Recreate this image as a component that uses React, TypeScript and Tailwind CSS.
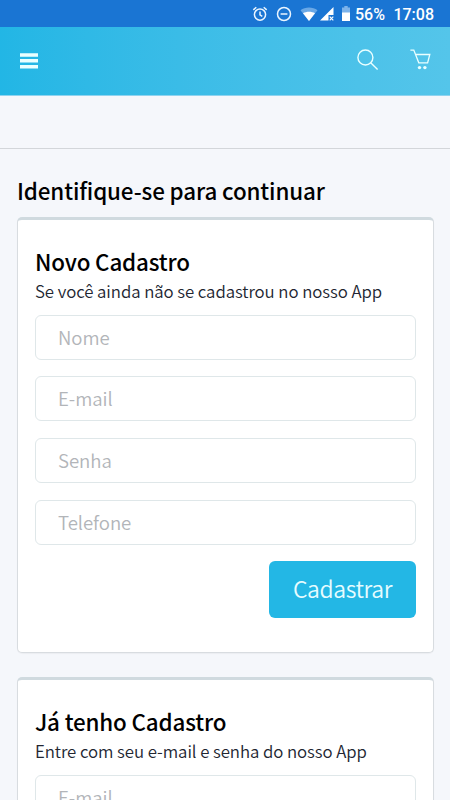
import type { ReactNode } from "react";

type FieldProps = {
  name: string;
  label: string;
  type?: string;
};

const StatusBar = () => (
  <div className="flex h-[27px] shrink-0 items-center justify-end bg-[#1a75d3] pr-[16px] text-white">
    <svg className="h-[16px] w-[16px]" viewBox="0 0 16 16" fill="none" stroke="#eaf5ff" strokeWidth="1.5">
      <circle cx="8" cy="8.6" r="5.6" />
      <path d="M8 5.4v3.5l2.3 1.5M1.3 3.9l3-2.6M14.7 3.9l-3-2.6" />
    </svg>
    <svg className="ml-[8px] h-[16px] w-[16px]" viewBox="0 0 16 16" fill="none" stroke="#eaf5ff" strokeWidth="1.5">
      <circle cx="8" cy="8" r="6.5" />
      <path d="M4.6 8h6.8" />
    </svg>
    <svg className="ml-[8px] h-[14px] w-[18px]" viewBox="0 0 18 14">
      <path d="M9 14L0.5 3.2C5 -0.4 13 -0.4 17.5 3.2z" fill="#6aa8e6" />
      <path d="M9 14L3 6.2C6.4 4.2 11.6 4.2 15 6.2z" fill="#fff" />
    </svg>
    <svg className="ml-[2px] h-[14px] w-[14px]" viewBox="0 0 14 14">
      <path d="M13.5 0v8H8.5v5.5H0z" fill="#fff" />
      <path d="M9.7 9.7l3.6 3.6M13.3 9.7l-3.6 3.6" stroke="#fff" strokeWidth="1.2" />
    </svg>
    <svg className="ml-[8px] h-[15px] w-[8px]" viewBox="0 0 8 15">
      <path d="M2.3 0h3.4v1.5H8V7H0V1.5h2.3z" fill="#7db3ea" />
      <path d="M0 6.5h8V15H0z" fill="#fff" />
    </svg>
    <span className="ml-[5px] pt-px font-[Roboto] text-[16px] leading-[27px] font-medium">56%</span>
    <span className="ml-[8.5px] pt-px font-[Roboto] text-[16px] leading-[27px] font-medium">17:08</span>
  </div>
);

const Header = () => (
  <header className="flex h-[69px] shrink-0 items-center border-b border-[#8fd3ef] bg-linear-to-r from-[#22b6e5] to-[#54c5ea] pr-[19px] pl-[20px]">
    <button aria-label="Menu" className="w-[18px]">
      <svg className="h-[16px] w-[18px]" viewBox="0 0 18 16" fill="#eaffff">
        <path d="M0 0.2h18v3.5H0zM0 6.1h18v3.5H0zM0 12h18v3.5H0z" />
      </svg>
    </button>
    <button aria-label="Buscar" className="ml-auto">
      <svg className="h-[22px] w-[22px] overflow-visible" viewBox="0 0 22 22" fill="none" stroke="#eaffff" strokeWidth="1.4">
        <circle cx="8.4" cy="7.5" r="7.5" />
        <path d="M13.7 12.8l6.9 6.7" />
      </svg>
    </button>
    <button aria-label="Carrinho" className="ml-[31px]">
      <svg className="h-[22px] w-[21px] overflow-visible" viewBox="0 0 21 22" fill="none" stroke="#eaffff" strokeWidth="1.3">
        <path d="M0.4 0.1h3.4l5 12.7h8.8l2.2-8.3H5.5" />
        <circle cx="9.5" cy="17.6" r="1.7" fill="#eaffff" stroke="none" />
        <circle cx="14.9" cy="17.6" r="1.7" fill="#eaffff" stroke="none" />
      </svg>
    </button>
  </header>
);

const Field = ({ name, label, type = "text" }: FieldProps) => (
  <input
    className="h-[45px] w-full rounded-[6px] border border-[#dfe7e9] bg-white px-[22px] pb-[2px] text-[18.6px] font-[350] tracking-[-0.05px] text-black placeholder:text-[#b2b5b9]"
    name={name}
    type={type}
    placeholder={label}
  />
);

const Card = ({ title, text, children }: { title: string; text: string; children: ReactNode }) => (
  <section className="rounded-[5px] border border-t-[3px] border-[#d8dce0] border-t-[#d0dadf] bg-white px-[17px] pt-[26px] pb-[34px] shadow-[0_1px_1px_rgba(0,0,0,0.04)]">
    <h2 className="text-[22.4px] leading-[30px] font-medium tracking-[-0.17px] text-black">{title}</h2>
    <p className="mt-[2px] text-[16.8px] leading-[27px] font-[350] tracking-[-0.06px] text-[#222631]">{text}</p>
    <form className="mt-[9.6px] flex flex-col gap-[16.7px]">{children}</form>
  </section>
);

const SubmitButton = ({ label }: { label: string }) => (
  <button type="button" className="h-[57px] w-[147px] self-end rounded-[6px] bg-[#23b7e5] pb-[3px] text-[23px] font-[350] tracking-[-0.4px] text-[#e6fcff]">
    {label}
  </button>
);

const App = () => {
  return (
    <div className="flex h-[800px] w-[450px] flex-col overflow-hidden bg-[#f5f7fb] font-['Noto_Sans_CJK_SC',sans-serif]">
      <StatusBar />
      <Header />
      <div className="h-[53px] shrink-0 border-b border-[#d3d6da]" />
      <main className="flex flex-col px-[17px] pr-[16px]">
        <h1 className="mt-[26px] mb-[12px] text-[22.4px] leading-[30px] font-medium tracking-[-0.13px] text-black">
          Identifique-se para continuar
        </h1>
        <div className="flex flex-col gap-[24px]">
          <Card title="Novo Cadastro" text="Se você ainda não se cadastrou no nosso App">
            <Field name="nome" label="Nome" />
            <Field name="email" label="E-mail" type="email" />
            <Field name="senha" label="Senha" type="password" />
            <Field name="telefone" label="Telefone" type="tel" />
            <SubmitButton label="Cadastrar" />
          </Card>
          <Card title="Já tenho Cadastro" text="Entre com seu e-mail e senha do nosso App">
            <Field name="login" label="E-mail" type="email" />
          </Card>
        </div>
      </main>
    </div>
  );
};

export default App;
